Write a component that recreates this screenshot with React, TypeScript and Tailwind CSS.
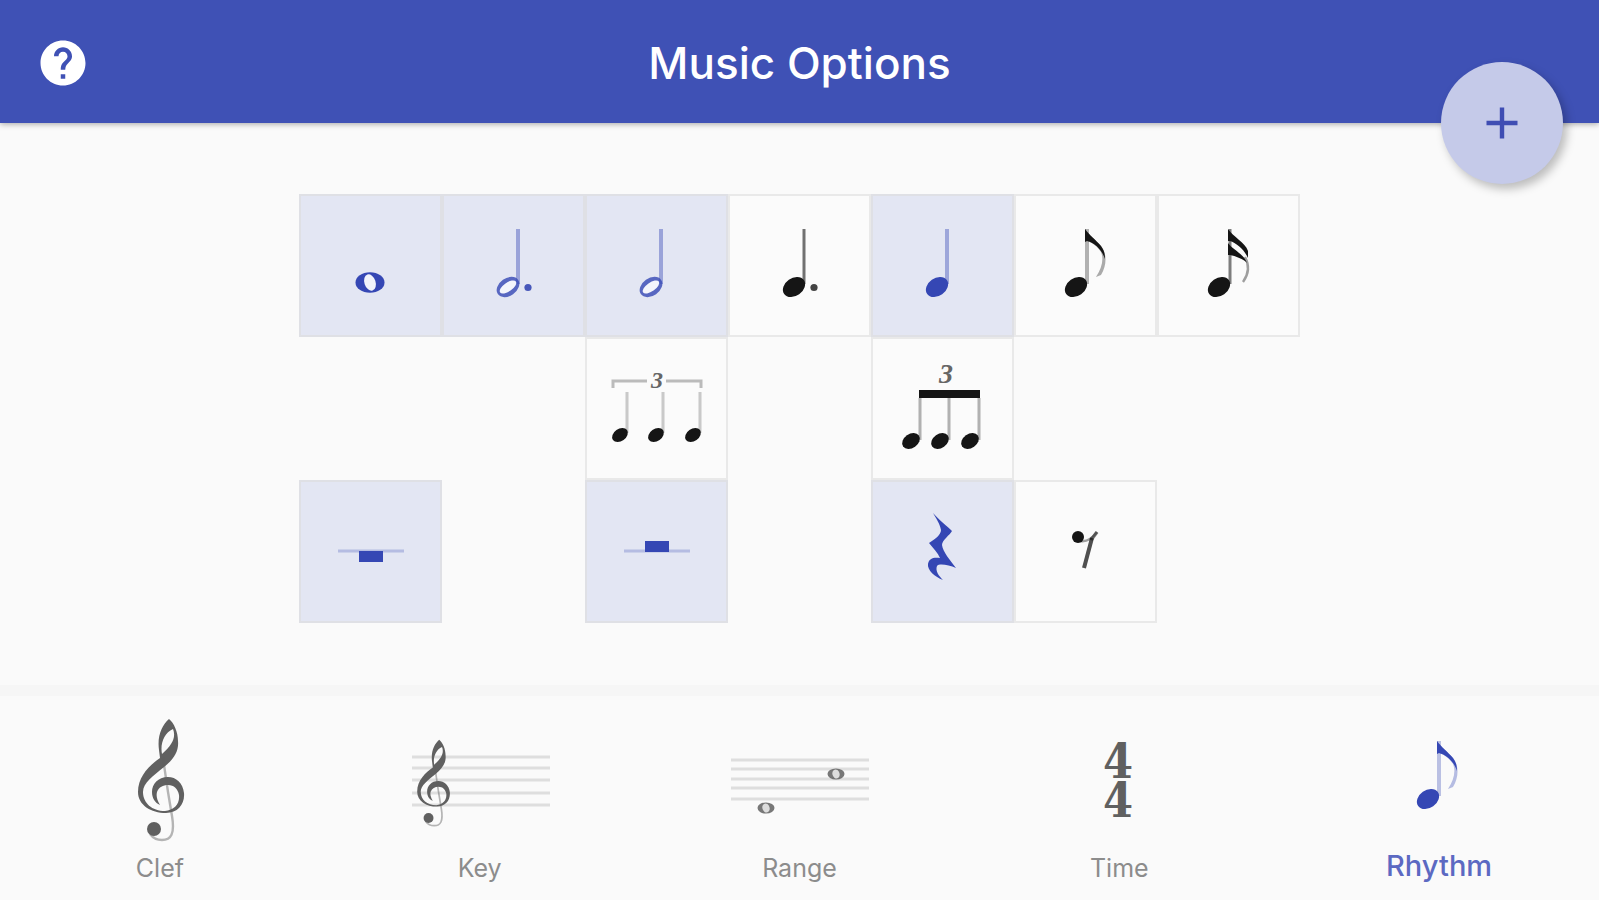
import { useState, type ReactNode } from "react";
import { MdHelp } from "react-icons/md";

type Point = { x: number; y: number };

function SolidHead({ x, y, rx = 12, ry = 9 }: Point & { rx?: number; ry?: number }) {
  return <ellipse cx={x} cy={y} rx={rx} ry={ry} transform={`rotate(-35 ${x} ${y})`} fill="currentColor" />;
}

function HollowHead({ x, y }: Point) {
  return (
    <g transform={`rotate(-35 ${x} ${y})`}>
      <ellipse cx={x} cy={y} rx="12.4" ry="8.8" fill="currentColor" opacity="0.8" />
      <ellipse cx={x} cy={y} rx="9.6" ry="4.4" fill="#f4f5fc" />
    </g>
  );
}

function Stem({
  x,
  top,
  bottom,
  width = 3,
  opacity = 0.42,
}: {
  x: number;
  top: number;
  bottom: number;
  width?: number;
  opacity?: number;
}) {
  return (
    <path d={`M${x} ${top}V${bottom}`} stroke="currentColor" strokeWidth={width} strokeOpacity={opacity} fill="none" />
  );
}

function WholeNote() {
  return (
    <>
      <ellipse cx="71" cy="88.5" rx="14.5" ry="10.2" fill="currentColor" />
      <ellipse cx="71" cy="88.5" rx="5.6" ry="8.4" transform="rotate(-18 71 88.5)" fill="#f1f3fb" />
    </>
  );
}

function HalfNote({ dotted = false }: { dotted?: boolean }) {
  return (
    <>
      <Stem x={76} top={35} bottom={90} width={4} />
      <HollowHead x={66} y={93} />
      {dotted && <circle cx="86" cy="93.5" r="3.6" fill="currentColor" opacity="0.9" />}
    </>
  );
}

function QuarterNote({ dotted = false }: { dotted?: boolean }) {
  return (
    <>
      <Stem x={76} top={35} bottom={90} width={dotted ? 3 : 4} opacity={dotted ? 0.6 : 0.4} />
      <SolidHead x={66} y={93} />
      {dotted && <circle cx="86" cy="93.5" r="3.6" fill="currentColor" opacity="0.8" />}
    </>
  );
}

function EighthNote() {
  return (
    <>
      <Stem x={73} top={35} bottom={90} width={4} opacity={0.32} />
      <SolidHead x={62} y={93} />
      <path
        d="M71 35C75 41 82 46 87 52C93 59 93 71 87 81L82 83C88 74 90 65 87 58C84 53 79 49 73 47L71 46Z"
        fill="currentColor"
        opacity="0.35"
      />
      <path d="M71 35C75 41 82 46 87 52C90 56 91 60 91 65C88 56 81 49 73 47L71 48Z" fill="currentColor" />
    </>
  );
}

function SixteenthNote() {
  return (
    <>
      <Stem x={73} top={35} bottom={90} width={3} opacity={0.55} />
      <SolidHead x={62} y={93} />
      <path d="M71 35C76 43 88 48 91 57V64C87 55 79 49 73 47L71 47Z" fill="currentColor" />
      <path d="M71 49C76 56 87 60 90 69C87 65 78 62 73 61L71 61Z" fill="currentColor" />
      <path d="M88 63C93 72 91 81 86 88" fill="none" stroke="currentColor" strokeWidth="2.4" opacity="0.4" />
    </>
  );
}

function QuarterTriplet() {
  return (
    <>
      <path d="M28 51V44H62M81 44H116V51" fill="none" stroke="currentColor" strokeWidth="3" opacity="0.28" />
      <text
        x="72"
        y="51"
        textAnchor="middle"
        fill="#666666"
        className="font-['Liberation_Serif',serif] text-[24px] font-bold italic"
      >
        3
      </text>
      {[35, 71, 108].map((x) => (
        <g key={x}>
          <Stem x={x + 7} top={55} bottom={96} opacity={0.22} />
          <SolidHead x={x} y={98} rx={8.6} ry={6.2} />
        </g>
      ))}
    </>
  );
}

function EighthTriplet() {
  return (
    <>
      <text
        x="75"
        y="46"
        textAnchor="middle"
        fill="#666666"
        className="font-['Liberation_Serif',serif] text-[28px] font-bold italic"
      >
        3
      </text>
      <path d="M48 53H109V61H48Z" fill="currentColor" />
      {[40, 69, 99].map((x) => (
        <g key={x}>
          <Stem x={x + 9} top={61} bottom={103} opacity={0.32} />
          <SolidHead x={x} y={104} rx={9.6} ry={7} />
        </g>
      ))}
    </>
  );
}

function BarRest({ hanging }: { hanging: boolean }) {
  return (
    <>
      <path d="M39 71H105" stroke="currentColor" strokeWidth="3" opacity="0.26" />
      <path d={hanging ? "M60 71H84V82H60Z" : "M60 61H84V72H60Z"} fill="currentColor" />
    </>
  );
}

function QuarterRest() {
  return (
    <path
      d="M62 33C68 40 76 46 81 51C79 55 71 60 71 65C72 72 79 80 85 88C78 85 68 83 66 86C64 91 68 96 72 100C64 97 56 90 57 84C58 78 63 77 69 78C67 73 62 68 58 63C64 59 70 55 70 50C69 44 65 38 62 33Z"
      fill="currentColor"
    />
  );
}

function EighthRest() {
  return (
    <>
      <circle cx="64" cy="57" r="6" fill="currentColor" />
      <path d="M66 61C72 62 78 59 83 52" fill="none" stroke="currentColor" strokeWidth="2.4" opacity="0.4" />
      <path d="M83 52L77 60" fill="none" stroke="currentColor" strokeWidth="3.4" opacity="0.55" />
      <path d="M78 58L70 88" fill="none" stroke="currentColor" strokeWidth="4" opacity="0.75" />
    </>
  );
}

function TrebleClef() {
  return (
    <>
      <path
        fillRule="evenodd"
        fill="currentColor"
        d="M89 11C82 17 77 28 79 42L80 50C70 57 58 68 58 84C58 97 71 105 86 105C98 105 105 96 104 85C103 75 96 69 88 69C78 69 72 76 72 84C72 90 75 95 80 97C77 92 76 88 77 84C79 79 83 77 88 77C94 77 98 81 99 87C100 96 94 102 85 103C72 103 63 95 63 84C63 75 73 68 84 59C94 51 99 43 98 33C98 24 94 15 89 11ZM93 21C96 29 93 36 82 46C80 36 84 25 93 21Z"
      />
      <path
        d="M83 50L88 84L92 108C95 126 91 132 82 132C77 132 73 130 70 126"
        fill="none"
        stroke="currentColor"
        strokeWidth="2.4"
        opacity="0.45"
      />
      <circle cx="74" cy="121" r="7" fill="currentColor" />
    </>
  );
}

function Staff({ lines }: { lines: number[] }) {
  return (
    <>
      {lines.map((y) => (
        <path key={y} d={`M12 ${y}H150`} stroke="#dedede" strokeWidth="3" />
      ))}
    </>
  );
}

function SmallWhole({ x, y }: Point) {
  return (
    <>
      <ellipse cx={x} cy={y} rx="8.5" ry="5.6" fill="currentColor" opacity="0.85" />
      <ellipse cx={x} cy={y} rx="3.6" ry="4.6" transform={`rotate(-18 ${x} ${y})`} fill="#dddddd" />
    </>
  );
}

function KeyIcon() {
  return (
    <>
      <Staff lines={[49, 60, 72, 85, 97]} />
      <g transform="translate(-24 24) scale(0.71)">
        <TrebleClef />
      </g>
    </>
  );
}

function RangeIcon() {
  return (
    <>
      <Staff lines={[52, 61, 71, 80, 91]} />
      <SmallWhole x={47} y={100} />
      <SmallWhole x={117} y={66} />
    </>
  );
}

function TimeIcon() {
  return (
    <text
      fill="currentColor"
      textAnchor="middle"
      className="font-['DejaVu_Serif_Condensed','DejaVu_Serif',serif] text-[48px] font-bold"
    >
      <tspan x="79" y="70">4</tspan>
      <tspan x="79" y="109">4</tspan>
    </text>
  );
}

type Duration = { name: string; place: string; icon: ReactNode };

const durations: Duration[] = [
  { name: "Whole note", place: "col-start-1 row-start-1", icon: <WholeNote /> },
  { name: "Dotted half note", place: "col-start-2 row-start-1", icon: <HalfNote dotted /> },
  { name: "Half note", place: "col-start-3 row-start-1", icon: <HalfNote /> },
  { name: "Dotted quarter note", place: "col-start-4 row-start-1", icon: <QuarterNote dotted /> },
  { name: "Quarter note", place: "col-start-5 row-start-1", icon: <QuarterNote /> },
  { name: "Eighth note", place: "col-start-6 row-start-1", icon: <EighthNote /> },
  { name: "Sixteenth note", place: "col-start-7 row-start-1", icon: <SixteenthNote /> },
  { name: "Quarter note triplet", place: "col-start-3 row-start-2", icon: <QuarterTriplet /> },
  { name: "Eighth note triplet", place: "col-start-5 row-start-2", icon: <EighthTriplet /> },
  { name: "Whole rest", place: "col-start-1 row-start-3", icon: <BarRest hanging /> },
  { name: "Half rest", place: "col-start-3 row-start-3", icon: <BarRest hanging={false} /> },
  { name: "Quarter rest", place: "col-start-5 row-start-3", icon: <QuarterRest /> },
  { name: "Eighth rest", place: "col-start-6 row-start-3", icon: <EighthRest /> },
];

const tabs: { label: string; icon: ReactNode }[] = [
  { label: "Clef", icon: <TrebleClef /> },
  { label: "Key", icon: <KeyIcon /> },
  { label: "Range", icon: <RangeIcon /> },
  { label: "Time", icon: <TimeIcon /> },
  {
    label: "Rhythm",
    icon: (
      <g transform="translate(7 -2)">
        <EighthNote />
      </g>
    ),
  },
];

export default function App() {
  const [selected, setSelected] = useState<string[]>([
    "Whole note",
    "Dotted half note",
    "Half note",
    "Quarter note",
    "Whole rest",
    "Half rest",
    "Quarter rest",
  ]);
  const [tab, setTab] = useState("Rhythm");

  const toggle = (name: string) =>
    setSelected((now) => (now.includes(name) ? now.filter((n) => n !== name) : [...now, name]));

  return (
    <div className="flex min-h-screen flex-col bg-[#fafafa] font-['Inter',sans-serif]">
      <header className="relative grid h-[123px] shrink-0 grid-cols-[1fr_auto_1fr] items-center bg-[#3f51b5] px-9 pt-0.5 shadow-[0_1px_6px_rgba(0,0,0,0.35)]">
        <button type="button" aria-label="Help" className="justify-self-start text-white">
          <MdHelp className="size-[54px]" />
        </button>
        <h1 className="text-[44px] leading-none font-medium text-white">Music Options</h1>
        <button
          type="button"
          aria-label="Add"
          className="absolute right-9 -bottom-[61px] z-10 flex size-[122px] items-center justify-center rounded-full bg-[#c5cae9] text-[#3f4db3] shadow-[4px_5px_10px_rgba(0,0,0,0.25)]"
        >
          <svg viewBox="0 0 32 32" className="size-8" fill="none" stroke="currentColor" strokeWidth="4.4">
            <path d="M16 0.5V31.5M0.5 16H31.5" />
          </svg>
        </button>
      </header>

      <main className="flex-1 pt-[71px] pb-[62px]">
        <div className="mx-auto grid w-full max-w-[1001px] grid-cols-7">
          {durations.map(({ name, place, icon }) => {
            const on = selected.includes(name);
            return (
              <button
                key={name}
                type="button"
                aria-label={name}
                aria-pressed={on}
                onClick={() => toggle(name)}
                className={`${place} aspect-square border-2 ${
                  on ? "border-[#dfe0e5] bg-[#e3e6f3] text-[#3547b4]" : "border-[#e9e9e9] bg-[#fbfbfb] text-[#151515]"
                }`}
              >
                <svg viewBox="2 2 139 139" className="block size-full">
                  {icon}
                </svg>
              </button>
            );
          })}
        </div>
      </main>

      <nav className="grid shrink-0 grid-cols-5 border-t-[11px] border-[#f6f6f6] pt-3">
        {tabs.map(({ label, icon }) => {
          const active = label === tab;
          return (
            <button
              key={label}
              type="button"
              aria-current={active ? "page" : undefined}
              onClick={() => setTab(label)}
              className={`flex h-48 flex-col items-center ${active ? "text-[#3547b4]" : "text-[#606060]"}`}
            >
              <svg viewBox="0 0 160 136" className="h-[136px] w-40">
                {icon}
              </svg>
              <span
                className={
                  active ? "pt-0.5 text-[29px] leading-10 font-medium text-[#5c69c2]" : "pt-1 text-[25px] leading-10 text-[#8c8c8c]"
                }
              >
                {label}
              </span>
            </button>
          );
        })}
      </nav>
    </div>
  );
}
